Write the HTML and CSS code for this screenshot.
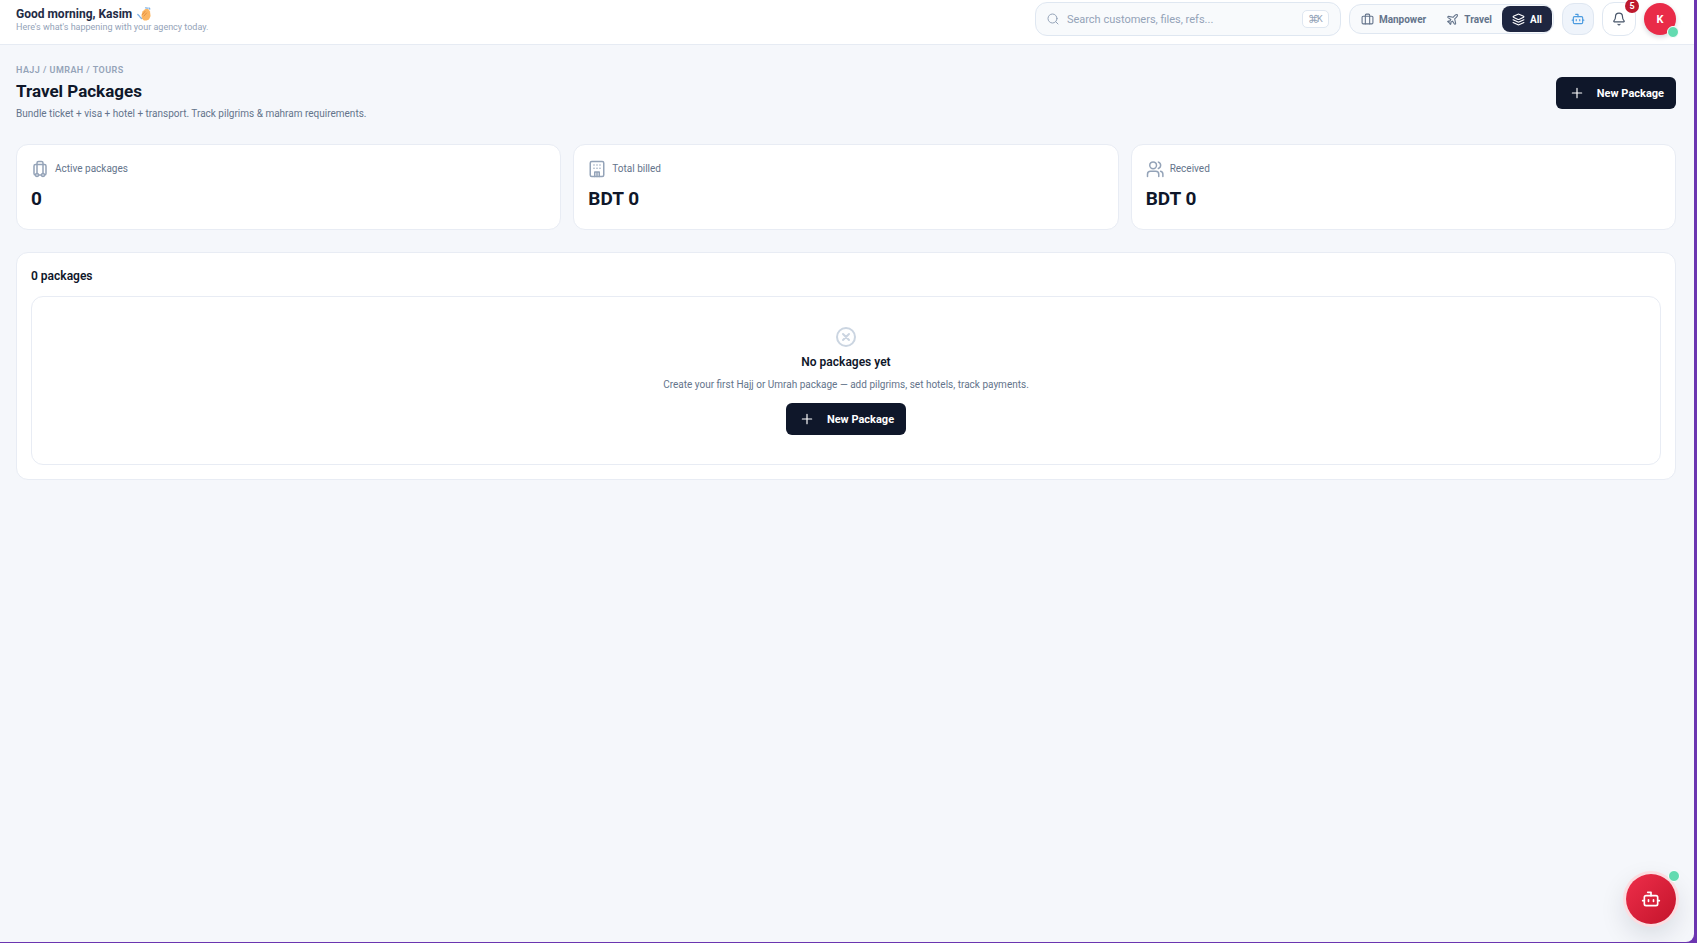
FILE: index.html
```html
<!DOCTYPE html>
<html lang="en">
<head>
  <meta charset="UTF-8" />
  <meta name="viewport" content="width=device-width, initial-scale=1.0" />
  <title>Travel Packages</title>
  <link rel="stylesheet" href="styles.css">
</head>
<body>
  <div class="app">
    <header class="topbar">
      <div class="greeting">
        <h2>Good morning, Kasim
          <svg class="wave" viewBox="0 0 14 14" aria-hidden="true">
            <path d="M5.500 4.500L8 2.200l1.500-.4 2 .4 1.500 2.300.6 4.500-1.600 3.500-2.500 1H7L4.800 11.500 4.500 8z" fill="#fbb562"/>
            <path d="M5.500 7.500l2.500-3M7 9l2.500-3" stroke="#e08a3c" stroke-width=".9" fill="none" stroke-linecap="round"/>
            <path d="M.8 7.500l1.500 1.500M3 10l1.500 1.500M8.500.8l2 .4M12 1l.8 1" stroke="#7fb2e5" stroke-width="1.300" fill="none" stroke-linecap="round"/>
          </svg>
        </h2>
        <p>Here's what's happening with your agency today.</p>
      </div>

      <div class="tools">
        <label class="search">
          <svg class="icon" viewBox="0 0 24 24"><circle cx="11" cy="11" r="9"/><path d="m22 22-4.500-4.500"/></svg>
          <input type="text" placeholder="Search customers, files, refs..." aria-label="Search">
          <kbd><span>⌘</span>K</kbd>
        </label>

        <div class="segment">
          <button type="button">
            <svg class="icon" viewBox="0 0 24 24"><path d="M16 20V4a2 2 0 0 0-2-2h-4a2 2 0 0 0-2 2v16"/><rect width="20" height="14" x="2" y="6" rx="2"/></svg>
            Manpower
          </button>
          <button type="button">
            <svg class="icon" viewBox="0 0 24 24"><path d="M17.800 19.200 16 11l3.500-3.500C21 6 21.500 4 21 3c-1-.5-3 0-4.500 1.500L13 8 4.800 6.200c-.5-.1-.9.1-1.100.5l-.3.5c-.2.5-.1 1 .3 1.300L9 12l-2 3H4l-1 1 3 2 2 3 1-1v-3l3-2 3.500 5.300c.3.4.8.5 1.300.3l.5-.2c.4-.3.6-.7.5-1.200z"/></svg>
            Travel
          </button>
          <button type="button" class="active">
            <svg class="icon" viewBox="0 0 24 24"><path d="m12.830 2.180a2 2 0 0 0-1.660 0L2.600 6.080a1 1 0 0 0 0 1.830l8.580 3.910a2 2 0 0 0 1.660 0l8.580-3.900a1 1 0 0 0 0-1.830Z"/><path d="m22 12.500-9.170 4.160a2 2 0 0 1-1.660 0L2 12.500"/><path d="m22 17.500-9.170 4.160a2 2 0 0 1-1.660 0L2 17.500"/></svg>
            All
          </button>
        </div>

        <button type="button" class="round-btn bot-btn" aria-label="Assistant">
          <svg class="icon" viewBox="0 0 24 24"><path d="M12 8V4H8"/><rect width="16" height="12" x="4" y="8" rx="2"/><path d="M2 14h2M20 14h2M15 13v2M9 13v2"/></svg>
        </button>
        <button type="button" class="round-btn bell-btn" aria-label="Notifications">
          <svg class="icon" viewBox="0 0 24 24"><path d="M10.270 21a2 2 0 0 0 3.460 0"/><path d="M3.260 15.330A1 1 0 0 0 4 17h16a1 1 0 0 0 .74-1.670C19.410 13.960 18 12.500 18 8A6 6 0 0 0 6 8c0 4.500-1.410 5.960-2.740 7.330"/></svg>
          <span class="badge">5</span>
        </button>
        <button type="button" class="avatar">K<span class="status"></span></button>
      </div>
    </header>

    <main class="content">
      <div class="page-head">
        <div>
          <p class="crumb">HAJJ / UMRAH / TOURS</p>
          <h1>Travel Packages</h1>
          <p class="desc">Bundle ticket + visa + hotel + transport. Track pilgrims &amp; mahram requirements.</p>
        </div>
        <button type="button" class="primary-btn">
          <svg class="icon" viewBox="0 0 24 24"><path d="M4 12h16M12 4v16"/></svg>
          New Package
        </button>
      </div>

      <div class="stats">
        <div class="card">
          <div class="card-label">
            <svg class="icon" viewBox="0 0 24 24"><path d="M6 20a2 2 0 0 1-2-2V8a2 2 0 0 1 2-2h12a2 2 0 0 1 2 2v10a2 2 0 0 1-2 2"/><path d="M8 18V4a2 2 0 0 1 2-2h4a2 2 0 0 1 2 2v14"/><path d="M10 20h4"/><circle cx="16" cy="20" r="2"/><circle cx="8" cy="20" r="2"/></svg>
            <span>Active packages</span>
          </div>
          <div class="card-value">0</div>
        </div>
        <div class="card">
          <div class="card-label">
            <svg class="icon" viewBox="0 0 24 24"><rect x="3" y="2" width="18" height="20" rx="2"/><path d="M9 22v-6h6v6M12 16v6M8 6.500h.01M12 6.500h.01M16 6.500h.01M8 11h.01M12 11h.01M16 11h.01"/></svg>
            <span>Total billed</span>
          </div>
          <div class="card-value">BDT 0</div>
        </div>
        <div class="card">
          <div class="card-label">
            <svg class="icon" viewBox="0 0 24 24"><path d="M17 22v-3a4 4 0 0 0-4-4H6a4 4 0 0 0-4 4v3"/><circle cx="9.500" cy="7" r="4.500"/><path d="M22.500 22v-3a4 4 0 0 0-3-3.870M16.500 2.800a4.500 4.500 0 0 1 0 8.500"/></svg>
            <span>Received</span>
          </div>
          <div class="card-value">BDT 0</div>
        </div>
      </div>

      <section class="panel">
        <h3>0 packages</h3>
        <div class="empty">
          <svg class="icon" viewBox="0 0 24 24"><circle cx="12" cy="12" r="9"/><path d="m15 9-6 6M9 9l6 6"/></svg>
          <h4>No packages yet</h4>
          <p class="desc">Create your first Hajj or Umrah package — add pilgrims, set hotels, track payments.</p>
          <button type="button" class="primary-btn">
            <svg class="icon" viewBox="0 0 24 24"><path d="M4 12h16M12 4v16"/></svg>
            New Package
          </button>
        </div>
      </section>
    </main>

    <button type="button" class="chat-btn" aria-label="Open assistant">
      <svg class="icon" viewBox="0 0 24 24"><path d="M12 8V4H8"/><rect width="16" height="12" x="4" y="8" rx="2"/><path d="M2 14h2M20 14h2M15 13v2M9 13v2"/></svg>
      <span class="status"></span>
    </button>
  </div>
</body>
</html>
```
FILE: styles.css
```css
* {
  margin: 0;
  padding: 0;
  box-sizing: border-box;
}
body {
  background: #6b35b0;
  font-family: Roboto, sans-serif;
  color: #0f172a;
}
button, input, kbd {
  font-family: inherit;
}
button {
  border: none;
  cursor: pointer;
}
.icon {
  fill: none;
  stroke: currentColor;
  stroke-width: 2;
  stroke-linecap: round;
  stroke-linejoin: round;
  flex-shrink: 0;
}
.app {
  min-height: calc(100vh - 1px);
  margin: 0 3px 1px 0;
  background: #f5f7fb;
  border-bottom-right-radius: 8px;
}

/* top bar */
.topbar {
  display: flex;
  justify-content: space-between;
  align-items: center;
  padding: 2px 18px 8px 16px;
  background: #fff;
  border-bottom: 1px solid #e6ebf3;
}
.greeting {
  padding-top: 2px;
}
.greeting h2 {
  display: flex;
  align-items: center;
  gap: 5px;
  font-size: 12px;
  line-height: 14px;
  color: #232b45;
}
.wave {
  width: 14px;
  height: 14px;
}
.greeting p {
  font-size: 9px;
  line-height: 12px;
  color: #94a3b8;
}
.tools {
  display: flex;
  align-items: center;
  gap: 8px;
}
.search {
  display: flex;
  align-items: center;
  gap: 8px;
  width: 306px;
  height: 34px;
  padding: 0 11px;
  background: #f8fafc;
  border: 1px solid #dfe7f1;
  border-radius: 12px;
  color: #94a3b8;
}
.search .icon {
  width: 12px;
  height: 12px;
}
.search input {
  flex: 1;
  min-width: 0;
  border: none;
  outline: none;
  background: none;
  font-size: 11px;
}
.search input::placeholder {
  color: #94a3b8;
}
.search kbd {
  display: flex;
  align-items: center;
  justify-content: center;
  width: 27px;
  height: 18px;
  background: #fff;
  border: 1px solid #dfe7f1;
  border-radius: 5px;
  font-size: 9px;
}
.search kbd span {
  margin-right: -2px;
  font-family: "DejaVu Sans", sans-serif;
  font-size: 11px;
}
.segment {
  display: flex;
  padding: 1px;
  background: #f8fafc;
  border: 1px solid #dfe7f1;
  border-radius: 12px;
}
.segment button {
  display: flex;
  align-items: center;
  gap: 5px;
  height: 26px;
  padding: 0 10px;
  background: none;
  border-radius: 8px;
  font-size: 10px;
  font-weight: 700;
  color: #64748b;
}
.segment .icon {
  width: 13px;
  height: 13px;
}
.segment .active {
  background: #1e2640;
  color: #fff;
}
.round-btn {
  position: relative;
  display: flex;
  align-items: center;
  justify-content: center;
  width: 34px;
  height: 34px;
  background: #fff;
  border: 1px solid #dfe7f1;
  border-radius: 12px;
  color: #475569;
}
.round-btn .icon {
  width: 14px;
  height: 14px;
}
.bot-btn {
  width: 32px;
  height: 32px;
  background: #eff4fb;
  color: #4b9be0;
}
.badge {
  position: absolute;
  top: -4px;
  right: -4px;
  width: 14px;
  height: 14px;
  border-radius: 50%;
  background: #be1a2e;
  color: #fff;
  font-size: 9px;
  line-height: 14px;
  font-weight: 700;
}
.avatar {
  position: relative;
  width: 32px;
  height: 32px;
  border-radius: 50%;
  background: #e92b48;
  box-shadow: 0 2px 5px rgba(15, 23, 42, 0.18);
  color: #fff;
  font-size: 11px;
  font-weight: 700;
}
.status {
  position: absolute;
  right: -3px;
  bottom: -3px;
  width: 12px;
  height: 12px;
  border: 1px solid #fff;
  border-radius: 50%;
  background: #63dbb0;
}

/* page */
.content {
  padding: 18px 18px 18px 16px;
}
.page-head {
  display: flex;
  justify-content: space-between;
  align-items: center;
  margin-bottom: 21px;
}
.crumb {
  font-size: 9px;
  line-height: 14px;
  font-weight: 600;
  letter-spacing: 0.05em;
  color: #94a3b8;
}
h1 {
  font-size: 17px;
  line-height: 28px;
}
.desc {
  font-size: 10px;
  line-height: 18px;
  color: #64748b;
}
.primary-btn {
  display: flex;
  align-items: center;
  gap: 13px;
  height: 32px;
  padding: 0 12px 0 14px;
  background: #0f172a;
  border-radius: 6px;
  color: #fff;
  font-size: 11px;
  font-weight: 700;
}
.primary-btn .icon {
  width: 14px;
  height: 14px;
}
.stats {
  display: grid;
  grid-template-columns: repeat(3, 1fr);
  gap: 12px;
  margin-bottom: 22px;
}
.card, .panel {
  background: #fff;
  border: 1px solid #e8ecf4;
  border-radius: 12px;
  padding: 14px;
}
.card-label {
  display: flex;
  align-items: center;
  gap: 6px;
  height: 20px;
  font-size: 10px;
  color: #64748b;
}
.card-label span {
  padding-bottom: 2px;
}
.card-label .icon {
  width: 18px;
  height: 18px;
  color: #94a3b8;
}
.card-value {
  margin-top: 6px;
  padding-bottom: 2px;
  font-size: 19px;
  line-height: 28px;
  font-weight: 700;
}
.panel h3, .empty h4 {
  font-size: 12px;
  line-height: 18px;
  font-weight: 600;
}
.panel h3 {
  margin-bottom: 11px;
}
.empty {
  display: flex;
  flex-direction: column;
  align-items: center;
  padding: 28px 16px 29px;
  border: 1px solid #e8ecf4;
  border-radius: 12px;
}
.empty > .icon {
  width: 24px;
  height: 24px;
  margin-bottom: 4px;
  color: #cbd5e1;
}
.empty .desc {
  margin: 5px 0 9px;
}

/* assistant button */
.chat-btn {
  position: fixed;
  right: 21px;
  bottom: 19px;
  display: flex;
  align-items: center;
  justify-content: center;
  width: 50px;
  height: 50px;
  border-radius: 50%;
  background: linear-gradient(135deg, #ee2e4a, #c3142b);
  box-shadow: 0 0 0 3px #fbdde1, 0 10px 28px rgba(15, 23, 42, 0.14);
  color: #fff;
}
.chat-btn .icon {
  width: 20px;
  height: 20px;
}
.chat-btn .status {
  top: -4px;
  right: -4px;
}
```
